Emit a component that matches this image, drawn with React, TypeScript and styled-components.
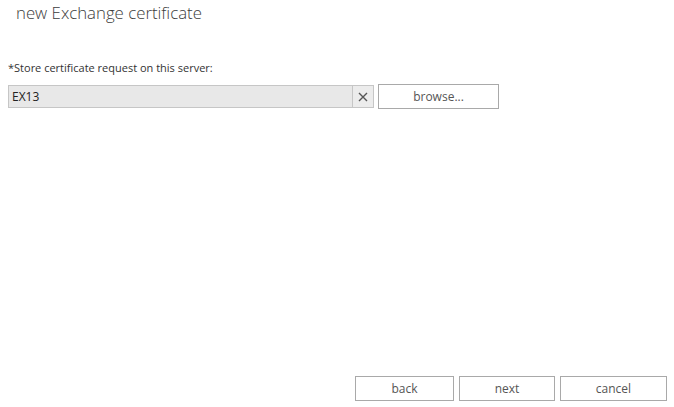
import React from 'react';
import styled, { createGlobalStyle } from 'styled-components';

const GlobalStyle = createGlobalStyle`
  html, body {
    margin: 0;
    padding: 0;
    background: #ffffff;
  }
  body {
    font-family: 'Open Sans', 'Noto Sans', sans-serif;
    color: #333333;
  }
`;

const Page = styled.div`
  display: flex;
  flex-direction: column;
  height: 407px;
  box-sizing: border-box;
  padding: 0 7px 7px 8px;
`;

const Title = styled.h1`
  margin: 0 0 0 8px;
  padding-top: 1px;
  font-size: 16.8px;
  font-weight: 300;
  line-height: 24px;
  color: #3c3c3c;
`;

const Label = styled.label`
  display: block;
  margin-top: 36px;
  font-size: 11px;
  line-height: 14px;
  color: #333333;
`;

const FieldRow = styled.div`
  display: flex;
  align-items: center;
  gap: 4px;
  margin-top: 9px;
`;

const InputBox = styled.div`
  display: flex;
  width: 366px;
  height: 23px;
  box-sizing: border-box;
  border: 1px solid #c6c6c6;
  background: #e8e8e8;
`;

const Input = styled.input`
  flex: 1;
  min-width: 0;
  border: none;
  outline: none;
  background: transparent;
  padding: 0 3px;
  font-family: inherit;
  font-size: 12px;
  color: #222222;
`;

const ClearButton = styled.button`
  display: flex;
  align-items: center;
  justify-content: center;
  width: 21px;
  padding: 0;
  border: none;
  border-left: 1px solid #c6c6c6;
  background: #ececec;
  cursor: pointer;
`;

const Button = styled.button<{ $width: number }>`
  width: ${({ $width }) => $width}px;
  height: 25px;
  box-sizing: border-box;
  border: 1px solid #a9a9a9;
  background: #ffffff;
  font-family: inherit;
  font-size: 12px;
  color: #555555;
  padding: 0;
  cursor: pointer;
`;

const Spacer = styled.div`
  flex: 1;
`;

const Footer = styled.div`
  display: flex;
  justify-content: flex-end;
  gap: 5px;
  margin-bottom: -1px;
`;

const App: React.FC = () => (
  <>
    <GlobalStyle />
    <Page>
      <Title>new Exchange certificate</Title>
      <Label htmlFor='server'>*Store certificate request on this server:</Label>
      <FieldRow>
        <InputBox>
          <Input id='server' defaultValue='EX13' />
          <ClearButton aria-label='clear'>
            <svg width='10' height='10' viewBox='0 0 10 10'>
              <path d='M1 1 L9 9 M9 1 L1 9' stroke='#555' strokeWidth='1.4' />
            </svg>
          </ClearButton>
        </InputBox>
        <Button $width={121}>browse...</Button>
      </FieldRow>
      <Spacer />
      <Footer>
        <Button $width={99}>back</Button>
        <Button $width={96}>next</Button>
        <Button $width={107}>cancel</Button>
      </Footer>
    </Page>
  </>
);

export default App;
